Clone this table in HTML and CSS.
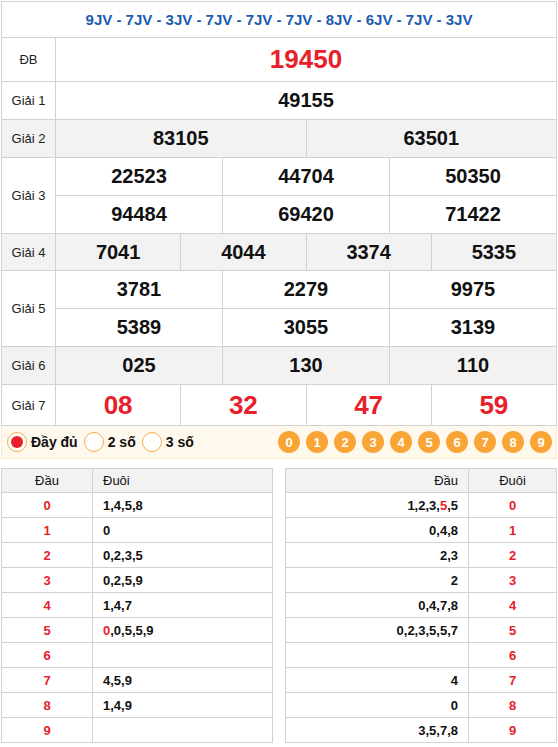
FILE: index.html
```html
<!DOCTYPE html>
<html lang="vi">
<head>
<meta charset="utf-8">
<title>KQXS</title>
<link rel="stylesheet" href="styles.css">
</head>
<body>
<table class="kq">
  <colgroup><col class="c-lbl"><col span="12"></colgroup>
  <tr><td colspan="13" class="code">9JV - 7JV - 3JV - 7JV - 7JV - 7JV - 8JV - 6JV - 7JV - 3JV</td></tr>
  <tr class="r-db"><td class="lbl">ĐB</td><td colspan="12" class="db">19450</td></tr>
  <tr><td class="lbl">Giải 1</td><td colspan="12">49155</td></tr>
  <tr class="gray"><td class="lbl">Giải 2</td><td colspan="6">83105</td><td colspan="6">63501</td></tr>
  <tr><td class="lbl" rowspan="2">Giải 3</td><td colspan="4">22523</td><td colspan="4">44704</td><td colspan="4">50350</td></tr>
  <tr><td colspan="4">94484</td><td colspan="4">69420</td><td colspan="4">71422</td></tr>
  <tr class="gray r-g4"><td class="lbl">Giải 4</td><td colspan="3">7041</td><td colspan="3">4044</td><td colspan="3">3374</td><td colspan="3">5335</td></tr>
  <tr><td class="lbl" rowspan="2">Giải 5</td><td colspan="4">3781</td><td colspan="4">2279</td><td colspan="4">9975</td></tr>
  <tr><td colspan="4">5389</td><td colspan="4">3055</td><td colspan="4">3139</td></tr>
  <tr class="gray"><td class="lbl">Giải 6</td><td colspan="4">025</td><td colspan="4">130</td><td colspan="4">110</td></tr>
  <tr class="r-g7"><td class="lbl">Giải 7</td><td colspan="3" class="red">08</td><td colspan="3" class="red">32</td><td colspan="3" class="red">47</td><td colspan="3" class="red">59</td></tr>
</table>

<div class="bar">
  <div class="radios">
    <label class="radio"><span class="dot on"></span>Đầy đủ</label>
    <label class="radio"><span class="dot"></span>2 số</label>
    <label class="radio"><span class="dot"></span>3 số</label>
  </div>
  <div class="balls">
    <span class="ball">0</span><span class="ball">1</span><span class="ball">2</span><span class="ball">3</span><span class="ball">4</span><span class="ball">5</span><span class="ball">6</span><span class="ball">7</span><span class="ball">8</span><span class="ball">9</span>
  </div>
</div>

<div class="loto">
  <table class="tk tk-left">
    <colgroup><col class="c1"><col></colgroup>
    <tr><th>Đầu</th><th class="al">Đuôi</th></tr>
    <tr><td class="red">0</td><td class="al">1,4,5,8</td></tr>
    <tr><td class="red">1</td><td class="al">0</td></tr>
    <tr><td class="red">2</td><td class="al">0,2,3,5</td></tr>
    <tr><td class="red">3</td><td class="al">0,2,5,9</td></tr>
    <tr><td class="red">4</td><td class="al">1,4,7</td></tr>
    <tr><td class="red">5</td><td class="al"><span class="red">0</span>,0,5,5,9</td></tr>
    <tr><td class="red">6</td><td class="al"></td></tr>
    <tr><td class="red">7</td><td class="al">4,5,9</td></tr>
    <tr><td class="red">8</td><td class="al">1,4,9</td></tr>
    <tr><td class="red">9</td><td class="al"></td></tr>
  </table>
  <table class="tk tk-right">
    <colgroup><col class="c1"><col></colgroup>
    <tr><th class="ar">Đầu</th><th>Đuôi</th></tr>
    <tr><td class="ar">1,2,3,<span class="red">5</span>,5</td><td class="red">0</td></tr>
    <tr><td class="ar">0,4,8</td><td class="red">1</td></tr>
    <tr><td class="ar">2,3</td><td class="red">2</td></tr>
    <tr><td class="ar">2</td><td class="red">3</td></tr>
    <tr><td class="ar">0,4,7,8</td><td class="red">4</td></tr>
    <tr><td class="ar">0,2,3,5,5,7</td><td class="red">5</td></tr>
    <tr><td class="ar"></td><td class="red">6</td></tr>
    <tr><td class="ar">4</td><td class="red">7</td></tr>
    <tr><td class="ar">0</td><td class="red">8</td></tr>
    <tr><td class="ar">3,5,7,8</td><td class="red">9</td></tr>
  </table>
</div>
</body>
</html>
```

FILE: styles.css
```css
* { box-sizing: border-box; }
body {
  margin: 0;
  padding: 1px 1px 0 1px;
  font-family: "Liberation Sans", Arial, sans-serif;
  color: #111;
  background: #fff;
}
.kq {
  width: 556px;
  border-collapse: collapse;
  table-layout: fixed;
}
.kq .c-lbl { width: 54px; }
.kq td {
  border: 1px solid #d2d2d2;
  text-align: center;
  padding: 0;
  height: 38px;
  font-size: 20px;
  font-weight: bold;
  color: #111;
}
.kq .code {
  height: 36px;
  font-size: 15px;
  color: #1a5cb0;
}
.kq .lbl {
  font-size: 13px;
  font-weight: normal;
  color: #222;
}
.kq .r-db td { height: 44px; }
.kq .r-g4 td { height: 37px; }
.kq .r-g7 td { height: 41px; }
.kq .db { font-size: 26px; color: #e8202a; }
.kq td.red { font-size: 26px; color: #e8202a; }
.gray td { background: #f2f2f2; }

.bar {
  width: 556px;
  height: 33px;
  display: flex;
  align-items: center;
  justify-content: space-between;
  background: #fff8ec;
  border: 1px solid #fbe9cf;
  border-top: none;
  padding: 0 4px 0 5px;
}
.radios { display: flex; align-items: center; }
.radio {
  display: flex;
  align-items: center;
  font-size: 14px;
  font-weight: bold;
  color: #111;
  margin-right: 6px;
}
.dot {
  width: 20px;
  height: 20px;
  border-radius: 50%;
  border: 1px solid #f6ac4a;
  background: #fff;
  margin-right: 4px;
  display: flex;
  align-items: center;
  justify-content: center;
}
.dot.on::after {
  content: "";
  width: 12px;
  height: 12px;
  border-radius: 50%;
  background: #e8202a;
}
.balls { display: flex; gap: 6px; }
.ball {
  width: 22px;
  height: 22px;
  border-radius: 50%;
  background: #f9a535;
  color: #fff;
  font-size: 13px;
  font-weight: bold;
  display: flex;
  align-items: center;
  justify-content: center;
}

.loto {
  display: flex;
  gap: 12px;
  margin-top: 9px;
}
.tk {
  width: 272px;
  border-collapse: collapse;
  table-layout: fixed;
}
.tk th, .tk td {
  border: 1px solid #d2d2d2;
  height: 25px;
  padding: 0 10px;
  font-size: 13px;
  text-align: center;
  color: #111;
}
.tk th {
  background: #f2f2f2;
  font-weight: normal;
  height: 24px;
}
.tk td { font-weight: bold; }
.tk-left .c1 { width: 91px; }
.tk-right .c1 { width: 183px; }
.tk .al { text-align: left; }
.tk .ar { text-align: right; }
.red { color: #e8202a; }
.tk td.red { color: #e8202a; }
```
